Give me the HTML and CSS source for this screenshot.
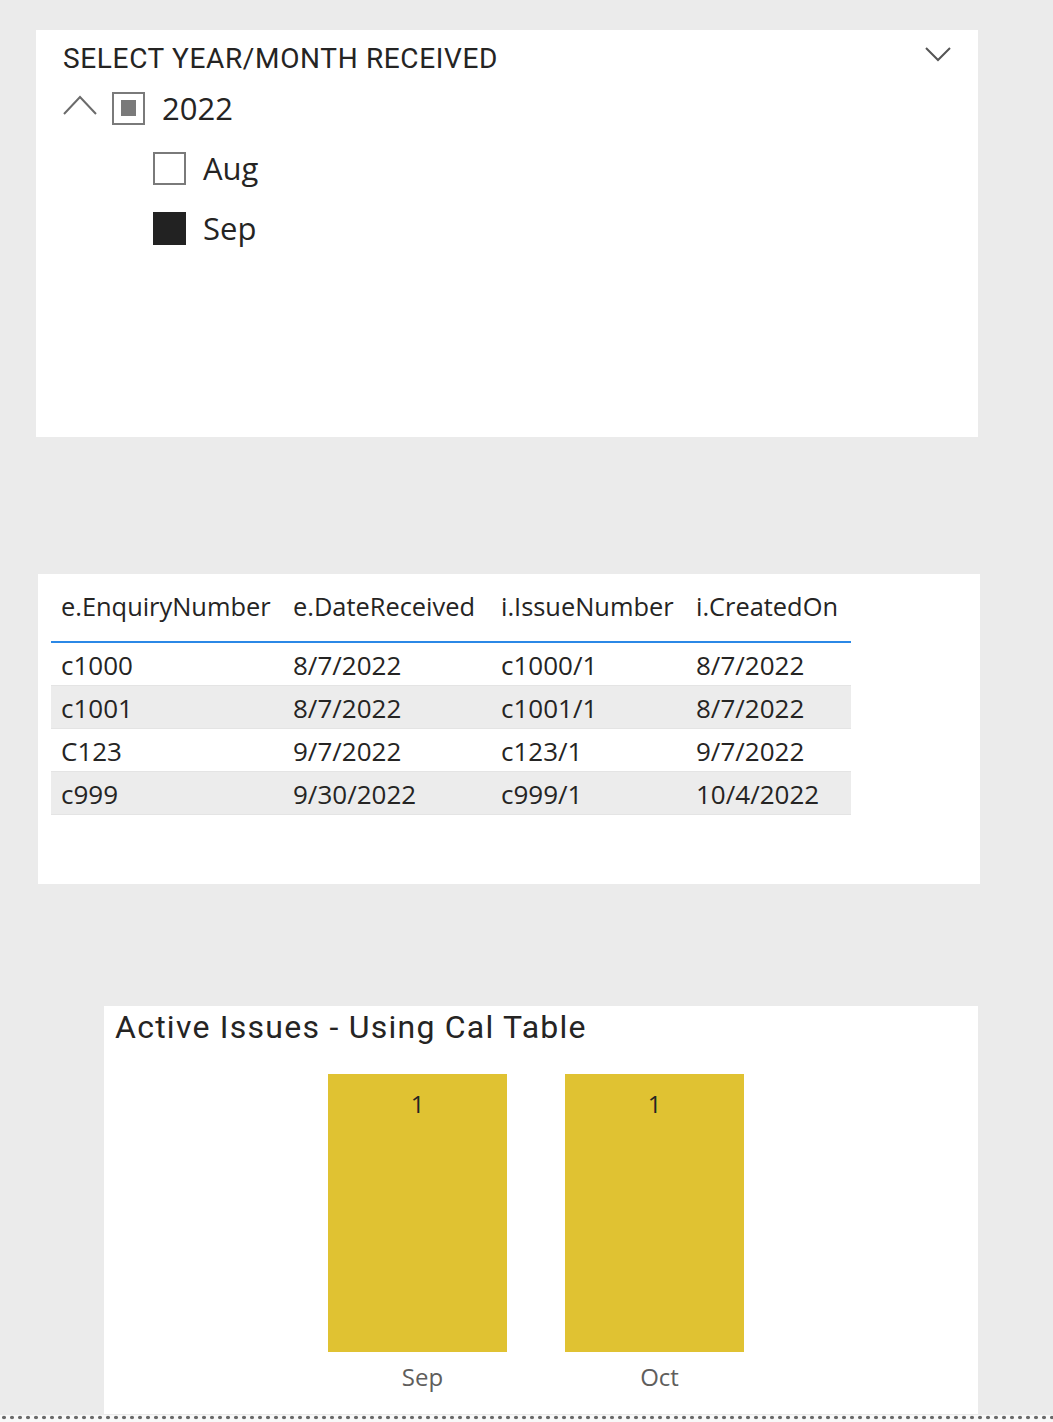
FILE: index.html
```html
<!DOCTYPE html>
<html lang="en">
<head>
    <meta charset="UTF-8">
    <title>Report</title>
    <link rel="stylesheet" href="styles.css">
</head>
<body>
    <div class="page">
        <div class="card slicer">
            <div class="slicer-head">
                <div class="slicer-title">SELECT YEAR/MONTH RECEIVED</div>
                <svg class="chev-down" width="26" height="16" viewBox="0 0 26 16">
                    <polyline points="1,2 13,14 25,2" fill="none" stroke="#555" stroke-width="2"/>
                </svg>
            </div>
            <div class="tree-row">
                <svg class="chev-up" width="34" height="22" viewBox="0 0 34 22">
                    <polyline points="1,20 17,3 33,20" fill="none" stroke="#6b6b6b" stroke-width="2"/>
                </svg>
                <span class="box partial"><span class="inner"></span></span>
                <span class="item-text">2022</span>
            </div>
            <div class="tree-row child">
                <span class="box"></span>
                <span class="item-text">Aug</span>
            </div>
            <div class="tree-row child">
                <span class="box checked"></span>
                <span class="item-text">Sep</span>
            </div>
        </div>

        <div class="card table-card">
            <table class="grid">
                <colgroup>
                    <col style="width: 232px">
                    <col style="width: 208px">
                    <col style="width: 195px">
                    <col style="width: 165px">
                </colgroup>
                <thead>
                    <tr>
                        <th>e.EnquiryNumber</th>
                        <th>e.DateReceived</th>
                        <th>i.IssueNumber</th>
                        <th>i.CreatedOn</th>
                    </tr>
                </thead>
                <tbody>
                    <tr><td>c1000</td><td>8/7/2022</td><td>c1000/1</td><td>8/7/2022</td></tr>
                    <tr class="alt"><td>c1001</td><td>8/7/2022</td><td>c1001/1</td><td>8/7/2022</td></tr>
                    <tr><td>C123</td><td>9/7/2022</td><td>c123/1</td><td>9/7/2022</td></tr>
                    <tr class="alt"><td>c999</td><td>9/30/2022</td><td>c999/1</td><td>10/4/2022</td></tr>
                </tbody>
            </table>
        </div>

        <div class="card chart-card">
            <div class="chart-title">Active Issues - Using Cal Table</div>
            <div class="plot">
                <div class="bar-col">
                    <div class="bar"><span class="bar-value">1</span></div>
                    <div class="axis-label">Sep</div>
                </div>
                <div class="bar-col">
                    <div class="bar"><span class="bar-value">1</span></div>
                    <div class="axis-label">Oct</div>
                </div>
            </div>
        </div>
    </div>
    <div class="page-edge"></div>
</body>
</html>
```

FILE: styles.css
```css
* {
    margin: 0;
    padding: 0;
    box-sizing: border-box;
}

body {
    background: #f8f8f8;
    color: #252423;
    font-family: "Open Sans", "Noto Sans", sans-serif;
    overflow: hidden;
}

.page {
    background: #ebebeb;
    height: 1415px;
    padding-top: 30px;
}

.card {
    background: #ffffff;
}

/* slicer */
.slicer {
    margin-left: 36px;
    width: 942px;
    height: 407px;
    padding: 8px 26px 0 27px;
}

.slicer-head {
    display: flex;
    justify-content: space-between;
    align-items: center;
    height: 40px;
}

.slicer-title {
    font-family: Roboto, "DejaVu Sans", sans-serif;
    font-size: 28px;
    letter-spacing: 0.65px;
    color: #252423;
}

.chev-down {
    margin-right: 1px;
    margin-top: -8px;
}

.tree-row {
    display: flex;
    align-items: center;
    height: 60px;
}

.tree-row.child {
    padding-left: 90px;
}

.chev-up {
    margin-right: 15px;
    margin-top: -6px;
}

.box {
    width: 33px;
    height: 33px;
    border: 2px solid #7a7a7a;
    display: flex;
    align-items: center;
    justify-content: center;
    flex-shrink: 0;
}

.box .inner {
    width: 15px;
    height: 16px;
    background: #7a7a7a;
}

.box.checked {
    background: #222222;
    border-color: #222222;
}

.item-text {
    margin-left: 17px;
    font-size: 31px;
    color: #252423;
}

/* table */
.table-card {
    margin: 137px 0 0 38px;
    width: 942px;
    height: 310px;
    padding-left: 13px;
}

.grid {
    border-collapse: collapse;
    table-layout: fixed;
    width: 800px;
    font-size: 26px;
}

.grid th {
    height: 68px;
    font-size: 25.4px;
    font-weight: normal;
    text-align: left;
    padding: 0 0 3px 10px;
    white-space: nowrap;
    border-bottom: 2px solid #2b88e6;
}

.grid td {
    height: 43px;
    padding: 2px 0 0 10px;
    border-bottom: 1px solid #e4e4e4;
    white-space: nowrap;
}

.grid tr.alt td {
    background: #ececec;
}

/* chart */
.chart-card {
    margin: 122px 0 0 104px;
    width: 874px;
    height: 408px;
    padding: 2px 0 0 11px;
}

.chart-title {
    font-family: Roboto, "DejaVu Sans", sans-serif;
    font-size: 32px;
    letter-spacing: 1.25px;
    color: #252423;
}

.plot {
    display: flex;
    gap: 58px;
    margin: 28px 0 0 213px;
}

.bar-col {
    width: 179px;
    display: flex;
    flex-direction: column;
    align-items: center;
}

.bar {
    width: 179px;
    height: 278px;
    background: #e0c232;
    display: flex;
    justify-content: center;
    padding-top: 16px;
}

.bar-value {
    font-size: 24px;
    line-height: 28px;
    color: #252423;
}

.axis-label {
    margin: 8px 0 0 10px;
    font-size: 24px;
    color: #605e5c;
}

.page-edge {
    height: 7px;
    background-image: radial-gradient(circle, #6a6a6a 1.6px, transparent 2.1px);
    background-size: 8px 5px;
    background-position: 0 0;
    background-repeat: repeat-x;
}
```
